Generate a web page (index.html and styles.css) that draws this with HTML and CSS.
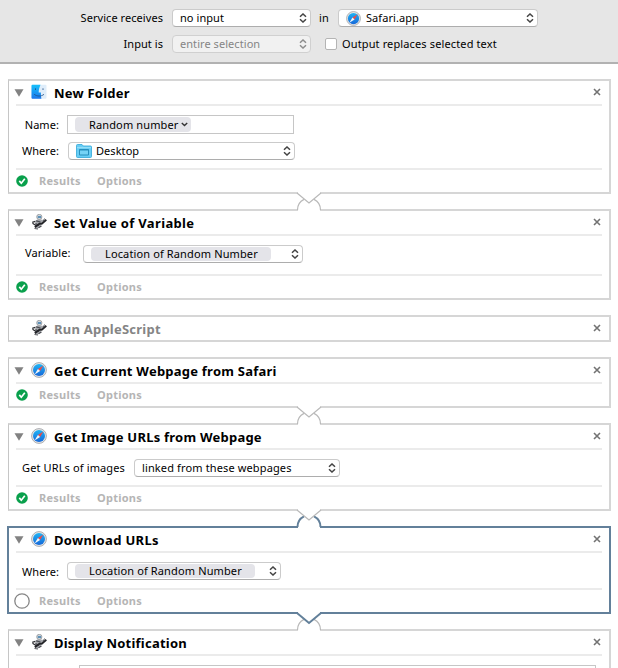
FILE: index.html
```html
<!DOCTYPE html>
<html lang="en">
<head>
<meta charset="utf-8">
<title>Automator workflow</title>
<link rel="stylesheet" href="styles.css">
</head>
<body>
<svg class="defs" aria-hidden="true">
  <defs>
    <linearGradient id="blue" x1="0" y1="0" x2="0" y2="1"><stop offset="0" stop-color="#1fb4f5"/><stop offset="1" stop-color="#1768d8"/></linearGradient>
    <linearGradient id="face" x1="0" y1="0" x2="0" y2="1"><stop offset="0" stop-color="#16c0fb"/><stop offset="1" stop-color="#1b76ec"/></linearGradient>
    <symbol id="safari" viewBox="0 0 16 16">
      <circle cx="8" cy="8" r="7.4" fill="#e6e7e9" stroke="#a5a7aa" stroke-width=".9"/>
      <circle cx="8" cy="8" r="6" fill="url(#blue)"/>
      <path d="M12.400 3.400 6.900 6.900l2.200 2.200z" fill="#f04a45"/>
      <path d="M3.600 12.600 6.900 6.900l2.200 2.200z" fill="#f4f6f9"/>
    </symbol>
    <symbol id="finder" viewBox="0 0 16 16">
      <rect x=".5" y=".8" width="15" height="14" rx="1" fill="#dfedfa"/>
      <path d="M1.500.8h8C8.400 3.300 7.700 5.900 7.700 8.600h2.200c-.1 2.200 0 4.200.5 6.200H1.500a1 1 0 0 1-1-1V1.800a1 1 0 0 1 1-1z" fill="url(#face)"/>
      <path d="M4.500 4.300v1.700M12 4.300v1.700M3.200 10.300c2.800 2.300 7.100 2.300 9.800 0" fill="none" stroke="#1d4d83" stroke-width=".8"/>
    </symbol>
    <symbol id="robot" viewBox="0 0 16 16">
      <path d="M4.500 6.500 7 5.200l4.500.5 1.500 2-3 4-3.500 3-2.500-1.500z" fill="#a4a6ab"/>
      <path d="M5.200 6.800 9.500 8M4.500 9.500l3.500 2M7.500 13.800 10.500 12" stroke="#4a4c52" stroke-width="1.200"/>
      <circle cx="8.300" cy="2.900" r="2.600" fill="#d3d7db" stroke="#85898f" stroke-width=".7"/>
      <path d="M6.800 2.200h3.300v1.600H6.800z" fill="#3f7fae"/>
      <path d="M1.200 8.300 4.300 7.400M1.500 9.300 5 11.500" stroke="#2c2d31" stroke-width="1.300"/>
      <path d="M3.800 13.300 8.500 9.800l2.500-.2 4.300-3.800" fill="none" stroke="#222327" stroke-width="1.900"/>
      <path d="M12.200 7.300 13.500 4.500M3.500 14.500l3.500.5" stroke="#55575d" stroke-width="1"/>
    </symbol>
    <symbol id="folder" viewBox="0 0 16 14">
      <path d="M.5 1.500q0-1 1-1H6l1.300 1.500h7.200q1 0 1 1v9.500q0 1-1 1h-13q-1 0-1-1z" fill="#67cdf5" stroke="#3eaedb" stroke-width=".9"/>
      <path d="M1 3.700h14" stroke="#a4e4fb" stroke-width=".9"/>
      <path d="M3.500 5.500h9v5.500h-9z" fill="#75d3f6" stroke="#278fbd" stroke-width="1"/>
      <path d="M3.500 5.900h9" stroke="#278fbd" stroke-width="1.200"/>
    </symbol>
    <symbol id="arrows" viewBox="0 0 8 10"><path d="M1 3.800 4 1l3 2.800M1 6.200 4 9l3-2.800" fill="none" stroke="currentColor" stroke-width="1.500"/></symbol>
    <symbol id="ok" viewBox="0 0 12 12"><circle cx="6" cy="6" r="5.800" fill="#09a04c"/><path d="M3.300 5.900 5.300 8.200 8.800 3.700" fill="none" stroke="#fff" stroke-width="1.700"/></symbol>
    <symbol id="pending" viewBox="0 0 16 16"><circle cx="8" cy="8" r="7.200" fill="#fff" stroke="#868686" stroke-width="1.300"/></symbol>
    <symbol id="close" viewBox="0 0 8 8"><path d="m1 1 6 6M7 1 1 7" stroke="#737373" stroke-width="1.600"/></symbol>
    <symbol id="triangle" viewBox="0 0 10 8"><path d="M.5.2h9L5 7.800z" fill="#828282"/></symbol>
  </defs>
</svg>

<header class="bar">
  <div class="row">
    <span class="row-label">Service receives</span>
    <div class="select w-input"><span>no input</span><svg class="arrows"><use href="#arrows"/></svg></div>
    <span class="in">in</span>
    <div class="select w-app"><svg class="app-icon"><use href="#safari"/></svg><span>Safari.app</span><svg class="arrows"><use href="#arrows"/></svg></div>
  </div>
  <div class="row">
    <span class="row-label">Input is</span>
    <div class="select w-input disabled"><span>entire selection</span><svg class="arrows"><use href="#arrows"/></svg></div>
    <span class="check"></span>
    <span class="wide">Output replaces selected text</span>
  </div>
</header>

<main class="flow">
  <section class="card">
    <div class="head"><svg class="tri"><use href="#triangle"/></svg><svg class="icon"><use href="#finder"/></svg><h2>New Folder</h2><svg class="close"><use href="#close"/></svg></div>
    <div class="body folder-body">
      <div class="line"><span class="label">Name:</span><div class="field"><span class="token random"><span class="wide">Random number</span><svg class="caret" viewBox="0 0 7 5"><path d="M.8 1 3.500 3.600 6.200 1" fill="none" stroke="#333" stroke-width="1.400"/></svg></span></div></div>
      <div class="line"><span class="label">Where:</span><div class="select w-desktop"><svg class="folder"><use href="#folder"/></svg><span>Desktop</span><svg class="arrows"><use href="#arrows"/></svg></div></div>
    </div>
    <div class="foot"><svg class="status"><use href="#ok"/></svg><span class="results">Results</span><span class="options">Options</span></div>
    <svg class="link" viewBox="0 0 28 20"><path class="cover" d="M3 0h22v19H3z"/><path class="arc" d="M2.500 18A11.800 11.800 0 0 1 9 7.400M25.500 18A11.800 11.800 0 0 0 19 7.400"/><path class="vee" d="M2 1 14 11 26 1"/></svg>
  </section>

  <section class="card">
    <div class="head"><svg class="tri"><use href="#triangle"/></svg><svg class="icon"><use href="#robot"/></svg><h2 class="loose">Set Value of Variable</h2><svg class="close"><use href="#close"/></svg></div>
    <div class="body variable-body">
      <div class="line"><span class="label">Variable:</span><div class="select w-variable"><span class="token"><span class="wide">Location of Random Number</span></span><svg class="arrows"><use href="#arrows"/></svg></div></div>
    </div>
    <div class="foot"><svg class="status"><use href="#ok"/></svg><span class="results">Results</span><span class="options">Options</span></div>
  </section>

  <section class="card collapsed">
    <div class="head"><span class="tri"></span><svg class="icon"><use href="#robot"/></svg><h2>Run AppleScript</h2><svg class="close"><use href="#close"/></svg></div>
  </section>

  <section class="card bodyless">
    <div class="head"><svg class="tri"><use href="#triangle"/></svg><svg class="icon"><use href="#safari"/></svg><h2>Get Current Webpage from Safari</h2><svg class="close"><use href="#close"/></svg></div>
    <div class="foot"><svg class="status"><use href="#ok"/></svg><span class="results">Results</span><span class="options">Options</span></div>
    <svg class="link" viewBox="0 0 28 20"><path class="cover" d="M3 0h22v19H3z"/><path class="arc" d="M2.500 18A11.800 11.800 0 0 1 9 7.400M25.500 18A11.800 11.800 0 0 0 19 7.400"/><path class="vee" d="M2 1 14 11 26 1"/></svg>
  </section>

  <section class="card">
    <div class="head"><svg class="tri"><use href="#triangle"/></svg><svg class="icon"><use href="#safari"/></svg><h2>Get Image URLs from Webpage</h2><svg class="close"><use href="#close"/></svg></div>
    <div class="body urls-body">
      <div class="line"><span class="label wide">Get URLs of images</span><div class="select w-linked"><span class="wide">linked from these webpages</span><svg class="arrows"><use href="#arrows"/></svg></div></div>
    </div>
    <div class="foot"><svg class="status"><use href="#ok"/></svg><span class="results">Results</span><span class="options">Options</span></div>
    <svg class="link into-selected" viewBox="0 0 28 20"><path class="cover" d="M3 0h22v19H3z"/><path class="arc" d="M2.500 18A11.800 11.800 0 0 1 9 7.400M25.500 18A11.800 11.800 0 0 0 19 7.400"/><path class="vee" d="M2 1 14 11 26 1"/></svg>
  </section>

  <section class="card selected">
    <div class="head"><svg class="tri"><use href="#triangle"/></svg><svg class="icon"><use href="#safari"/></svg><h2 class="loose">Download URLs</h2><svg class="close"><use href="#close"/></svg></div>
    <div class="body download-body">
      <div class="line"><span class="label">Where:</span><div class="select w-download"><span class="token"><span class="wide">Location of Random Number</span></span><svg class="arrows"><use href="#arrows"/></svg></div></div>
    </div>
    <div class="foot"><svg class="status pending"><use href="#pending"/></svg><span class="results">Results</span><span class="options">Options</span></div>
    <svg class="link from-selected" viewBox="0 0 28 20"><path class="cover" d="M3 0h22v19H3z"/><path class="arc" d="M2.500 18A11.800 11.800 0 0 1 9 7.400M25.500 18A11.800 11.800 0 0 0 19 7.400"/><path class="vee" d="M2 1 14 11 26 1"/></svg>
  </section>

  <section class="card last">
    <div class="head"><svg class="tri"><use href="#triangle"/></svg><svg class="icon"><use href="#robot"/></svg><h2>Display Notification</h2><svg class="close"><use href="#close"/></svg></div>
    <div class="body notice-body"><div class="notice-field"></div></div>
  </section>
</main>
</body>
</html>
```
FILE: styles.css
```css
* { box-sizing: border-box; }
html, body { height: 668px; overflow: hidden; }
body {
  margin: 0;
  background: #fff;
  color: #000;
  font: 11px/14px "Noto Sans", "Open Sans", sans-serif;
  letter-spacing: .06px;
  white-space: nowrap;
}
svg { display: block; flex: none; }
.defs { position: absolute; width: 0; height: 0; }
.wide { letter-spacing: .13px; }

.bar {
  height: 64px;
  padding-top: 9px;
  background: #e6e6e6;
  border-bottom: 2px solid #b2b2b2;
  display: flex;
  flex-direction: column;
  gap: 8px;
}
.row { display: flex; align-items: center; height: 18px; }
.row-label { width: 163px; margin-right: 9px; text-align: right; }
.in { width: 10px; margin: 0 9px 0 8px; }
.check {
  width: 12px; height: 12px;
  margin: 0 5px 0 14px;
  background: #fff;
  border: 1px solid #b4b4b4;
  border-radius: 2px;
}

.select {
  display: flex;
  align-items: center;
  flex: none;
  height: 18px;
  padding: 0 3px 0 7px;
  background: #fff;
  border: 1px solid #cbcbcb;
  border-bottom-color: #adadad;
  border-radius: 4px;
}
.select.disabled { background: #f1f1f1; border-color: #d0d0d0; color: #858585; }
.arrows { width: 8px; height: 10px; margin-left: auto; color: #444; }
.disabled .arrows { color: #8d8d8d; }
.w-input { width: 139px; }
.w-app { width: 200px; }
.w-desktop { width: 227px; }
.w-variable { width: 220px; }
.w-linked { width: 206px; }
.w-download { width: 214px; }
.app-icon { width: 15px; height: 15px; margin-right: 5px; }
.folder { width: 16px; height: 14px; margin-right: 4px; }

.flow { display: flex; flex-direction: column; gap: 15px; padding: 15px 7px 0; }
.card {
  position: relative;
  flex: none;
  margin-left: 1px;
  border: 2px solid #d6d6d6;
  border-left: 1px solid #c6c6c6;
  background: #fff;
}
.card.selected { margin-left: 0; border: 2px solid #63809a; }
.head {
  display: flex;
  align-items: center;
  height: 25px;
  margin: 0 7px;
  border-bottom: 2px solid #ebebeb;
}
.collapsed .head { height: 23px; border-bottom: 0; color: #858585; }
.bodyless .head { height: 23px; border-bottom: 0; }
.tri { width: 10px; height: 8px; margin: 0 7px 0 -2px; }
.icon { width: 16px; height: 16px; margin: -1px 7px 0 0; }
h2 { margin: 1px 0 0; font-size: 13px; line-height: 18px; font-weight: 700; letter-spacing: .23px; }
h2.loose { letter-spacing: .34px; }
.close { width: 8px; height: 8px; margin: -2px 1px 0 auto; }

.foot {
  display: flex;
  align-items: center;
  height: 24px;
  margin: 0 7px;
  border-top: 2px solid #ebebeb;
  color: #b5b5b5;
  font-weight: 700;
  letter-spacing: .25px;
}
.status { width: 12px; height: 12px; margin-right: 11px; }
.status.pending { width: 16px; height: 16px; margin: 0 9px 0 -2px; }
.results { width: 58px; }

.line { display: flex; align-items: center; }
.label { flex: none; }
.folder-body { height: 62px; padding: 9px 0 0 13px; display: flex; flex-direction: column; gap: 8px; }
.folder-body .label { width: 37px; margin-right: 8px; display: flex; justify-content: flex-end; }
.folder-body .select { margin-left: 1px; }
.folder-body .field {
  display: flex; align-items: center;
  width: 227px; height: 19px;
  padding-left: 7px;
  border: 1px solid #c6c6c6;
}
.token {
  display: flex; align-items: center;
  width: 180px; height: 14px;
  padding-left: 14px;
  border-radius: 4px;
  background: #e4e4e9;
}
.token.random { width: 116px; height: 15px; }
.caret { width: 7px; height: 5px; margin-left: auto; margin-right: 3px; }
.variable-body { height: 38px; padding: 9px 0 0 16px; }
.variable-body .label { width: 47px; margin: -2px 11px 0 0; }
.urls-body { height: 35px; padding: 9px 0 0 13px; }
.urls-body .label { width: 103px; margin-right: 9px; }
.download-body { height: 35px; padding: 9px 0 0 13px; }
.download-body .label { width: 37px; margin: 1px 8px 0 0; }
.card.last { border-bottom: 0; }
.notice-body { height: 12px; padding: 9px 0 0 70px; }
.notice-field { width: 517px; height: 3px; border: 1px solid #c6c6c6; border-bottom: 0; }

.link {
  position: absolute;
  z-index: 1;
  left: 286px;
  top: 100%;
  width: 28px;
  height: 20px;
}
.link path { fill: none; stroke: #b9b9b9; stroke-width: 1.200; }
.link .cover { fill: #fff; stroke: none; }
.link .vee { fill: #fff; }
.into-selected .arc, .from-selected .vee { stroke: #63809a; stroke-width: 2; }
```
